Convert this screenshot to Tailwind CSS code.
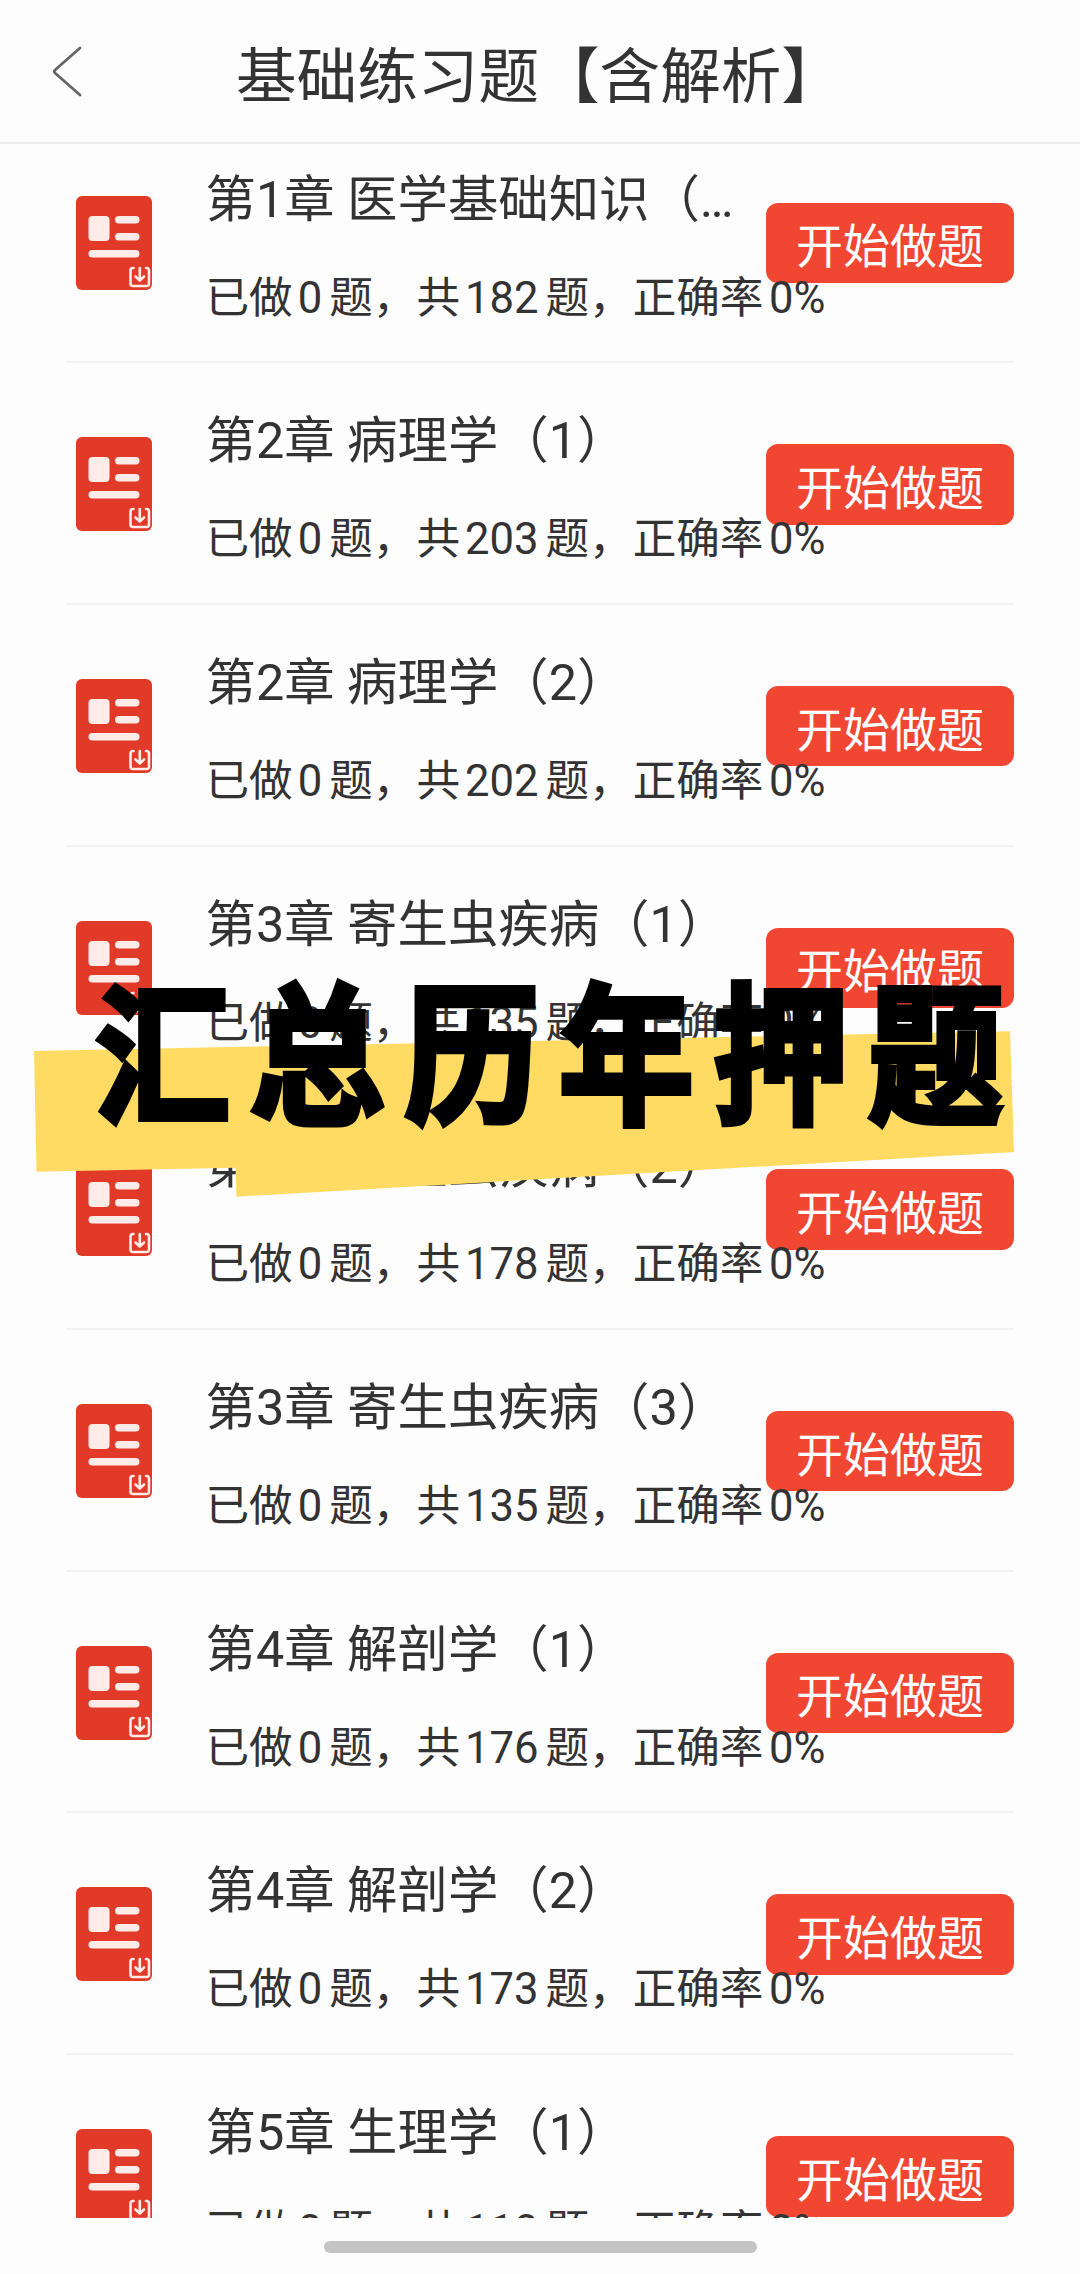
<!DOCTYPE html>
<html lang="zh-CN">
<head>
    <meta charset="UTF-8">
    <meta name="viewport" content="width=device-width, initial-scale=1.0">
    <title>基础练习题</title>
    <script src="https://cdn.jsdelivr.net/npm/@tailwindcss/browser@4"></script>
</head>
<body class="bg-[#fdfdfd] text-[#333333] font-[Roboto,'Noto_Sans_CJK_SC',sans-serif]">
    <div class="relative w-[1080px] h-[2274px] overflow-hidden flex flex-col">
        <header class="relative h-[144px] shrink-0 border-b-2 border-[#eeeeee] flex items-center pl-[50px]">
            <svg class="w-8 h-[52px]" viewBox="0 0 32 52" fill="none" stroke="#666" stroke-width="2.8" stroke-linecap="round" stroke-linejoin="round">
                <path d="M30 3 L5 25 Q3.500 26.500 5 28 L30 50"/>
            </svg>
            <h1 class="ml-[154px] pt-[15px] text-[60.600px] leading-none whitespace-nowrap">基础练习题【含解析】</h1>
        </header>

        <main class="h-[2074px] shrink-0 overflow-hidden px-[66px]">
            <ul id="list" class="-mt-[22.500px]"></ul>
        </main>

        <footer class="flex-1 flex justify-center pt-[22.500px]">
            <div class="w-[433px] h-[12.500px] rounded-full bg-[#c4c4c4]"></div>
        </footer>

        <!-- promo banner over the list -->
        <div class="absolute z-20 left-0 top-[960px] w-[1080px] h-[260px]">
            <svg class="absolute inset-0 w-full h-full" viewBox="0 0 1080 260">
                <path fill="#ffdb63" d="M34 91 L1010 71.300 L1014 192 L236.500 236.700 L235.500 207.700 L36.500 211.700 Z"/>
            </svg>
            <p class="absolute left-[95px] top-[10px] origin-left scale-x-[0.89] text-[152px] leading-none tracking-[21.700px] font-bold text-black whitespace-nowrap font-['Noto_Sans_CJK_SC',sans-serif] [-webkit-text-stroke:6px_#000] [stroke-linejoin:round]">汇总历年押题</p>
        </div>
    </div>

    <script>
        const chapters = [
            ['第1章 医学基础知识（1）', 182],
            ['第2章 病理学（1）', 203],
            ['第2章 病理学（2）', 202],
            ['第3章 寄生虫疾病（1）', 135],
            ['第3章 寄生虫疾病（2）', 178],
            ['第3章 寄生虫疾病（3）', 135],
            ['第4章 解剖学（1）', 176],
            ['第4章 解剖学（2）', 173],
            ['第5章 生理学（1）', 110],
        ];

        document.getElementById('list').innerHTML = chapters.map(([title, total]) => `
            <li class="relative h-[241.700px] border-b-2 border-[#f2f2f2] flex">
                <svg class="mt-[74px] ml-[10px] w-[76px] h-[94px] shrink-0" viewBox="0 0 76 94">
                    <rect width="76" height="94" rx="6" fill="#e13a28"/>
                    <g fill="#ffebe8">
                        <rect x="12.500" y="20" width="21" height="25" rx="4"/>
                        <rect x="39" y="20" width="24.500" height="7.500" rx="3.750"/>
                        <rect x="39" y="37" width="24.500" height="7.500" rx="3.750"/>
                        <rect x="12.500" y="54" width="51" height="7.500" rx="3.750"/>
                    </g>
                    <g fill="none" stroke="#ffebe8" stroke-width="2.600" stroke-linecap="round" stroke-linejoin="round">
                        <path d="M57.500 72 H57 Q54.500 72 54.500 74.500 V87.500 Q54.500 90 57 90 H70.500 Q73 90 73 87.500 V74.500 Q73 72 70.500 72 H70"/>
                        <path d="M63.800 72 V84.500 M59.500 80.500 L63.800 84.500 L68 80.500"/>
                    </g>
                </svg>
                <div class="ml-[53.500px] w-[532px]">
                    <h2 class="mt-[48px] text-[50.400px] leading-[60px] truncate">${title}</h2>
                    <p class="relative z-10 mt-[41px] text-[43.600px] leading-[56px] whitespace-nowrap">已做<span class="ml-[5px] mr-[7px]">0</span>题，共<span class="ml-[5px] mr-[7px]">${total}</span>题，正确率<span class="ml-[5.500px]">0%</span></p>
                </div>
                <button class="absolute right-0 top-[81px] w-[248px] h-[80.500px] rounded-xl bg-[#f04632] text-white text-[47px] leading-none pt-[8px]">开始做题</button>
            </li>
        `).join('');
    </script>
</body>
</html>
